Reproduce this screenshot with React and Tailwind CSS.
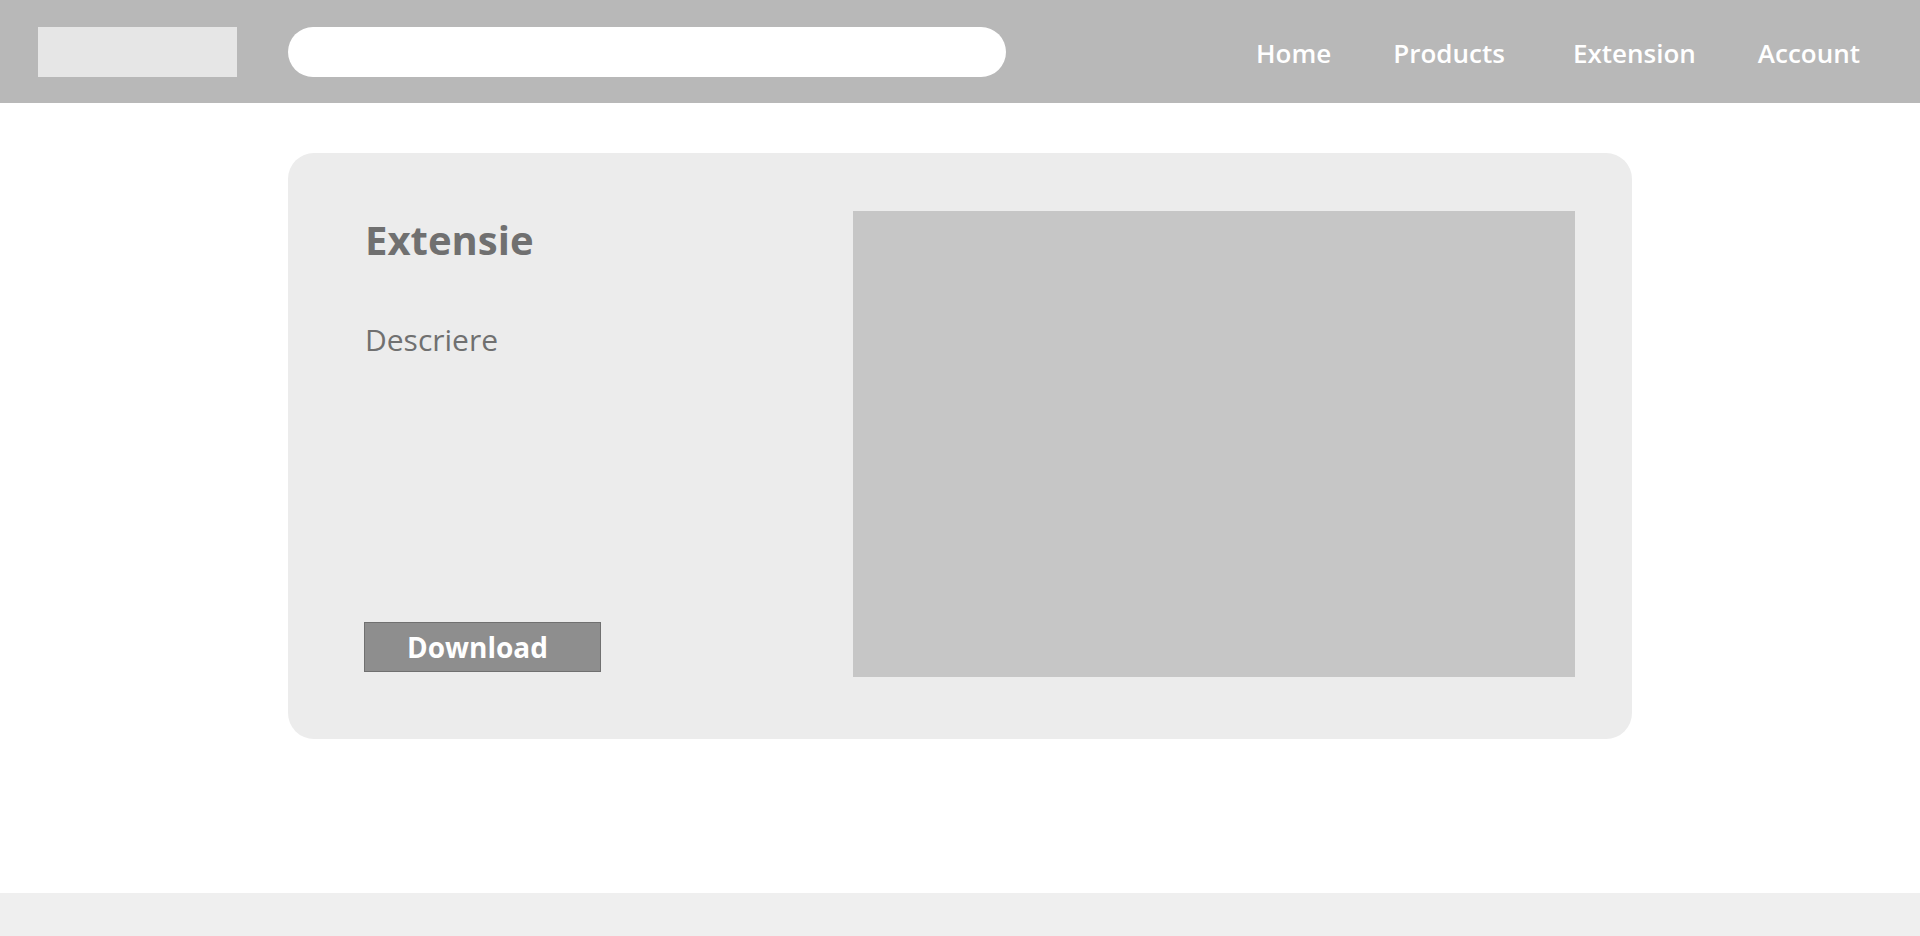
export default function App() {
  const links = ["Home", "Products", "Extension", "Account"];

  return (
    <div className="flex h-screen flex-col overflow-hidden bg-white font-['Open_Sans',sans-serif]">
      {/* Top bar */}
      <header className="flex h-[103px] shrink-0 items-center bg-[#b8b8b8] pl-[38px] pr-[60px]">
        <div className="h-[50px] w-[199px] bg-[#e6e6e6]" />
        <input
          type="text"
          className="ml-[51px] h-[50px] w-[718px] rounded-full bg-white px-6 outline-none"
        />
        <nav className="ml-auto flex gap-[62px] pt-[3px] text-[26px] font-semibold text-white">
          {links.map((l) => (
            <a key={l} href="#" className={l === "Products" ? "mr-[6px] leading-none" : "leading-none"}>
              {l}
            </a>
          ))}
        </nav>
      </header>

      {/* Extension card */}
      <main className="shrink-0 pt-[50px] pb-[154px]">
        <div className="mx-auto flex h-[586px] w-[1344px] rounded-[26px] bg-[#ececec] pl-[76px] pr-[57px] pt-[58px] pb-[62px]">
          <div className="flex w-[489px] flex-col text-[#707070]">
            <h1 className="ml-[1px] mt-[5px] text-[40px] font-bold leading-[48px]">Extensie</h1>
            <p className="ml-[1px] mt-[58px] text-[30px] leading-[36px]">Descriere</p>
            <button className="mb-[5px] mt-auto h-[50px] w-[237px] border border-[#707070] bg-[#8e8e8e] pr-[10px] text-[28px] font-bold leading-none text-white">
              Download
            </button>
          </div>
          <div className="h-[466px] w-[722px] bg-[#c6c6c6]" />
        </div>
      </main>

      <footer className="flex-1 bg-[#efefef]" />
    </div>
  );
}
